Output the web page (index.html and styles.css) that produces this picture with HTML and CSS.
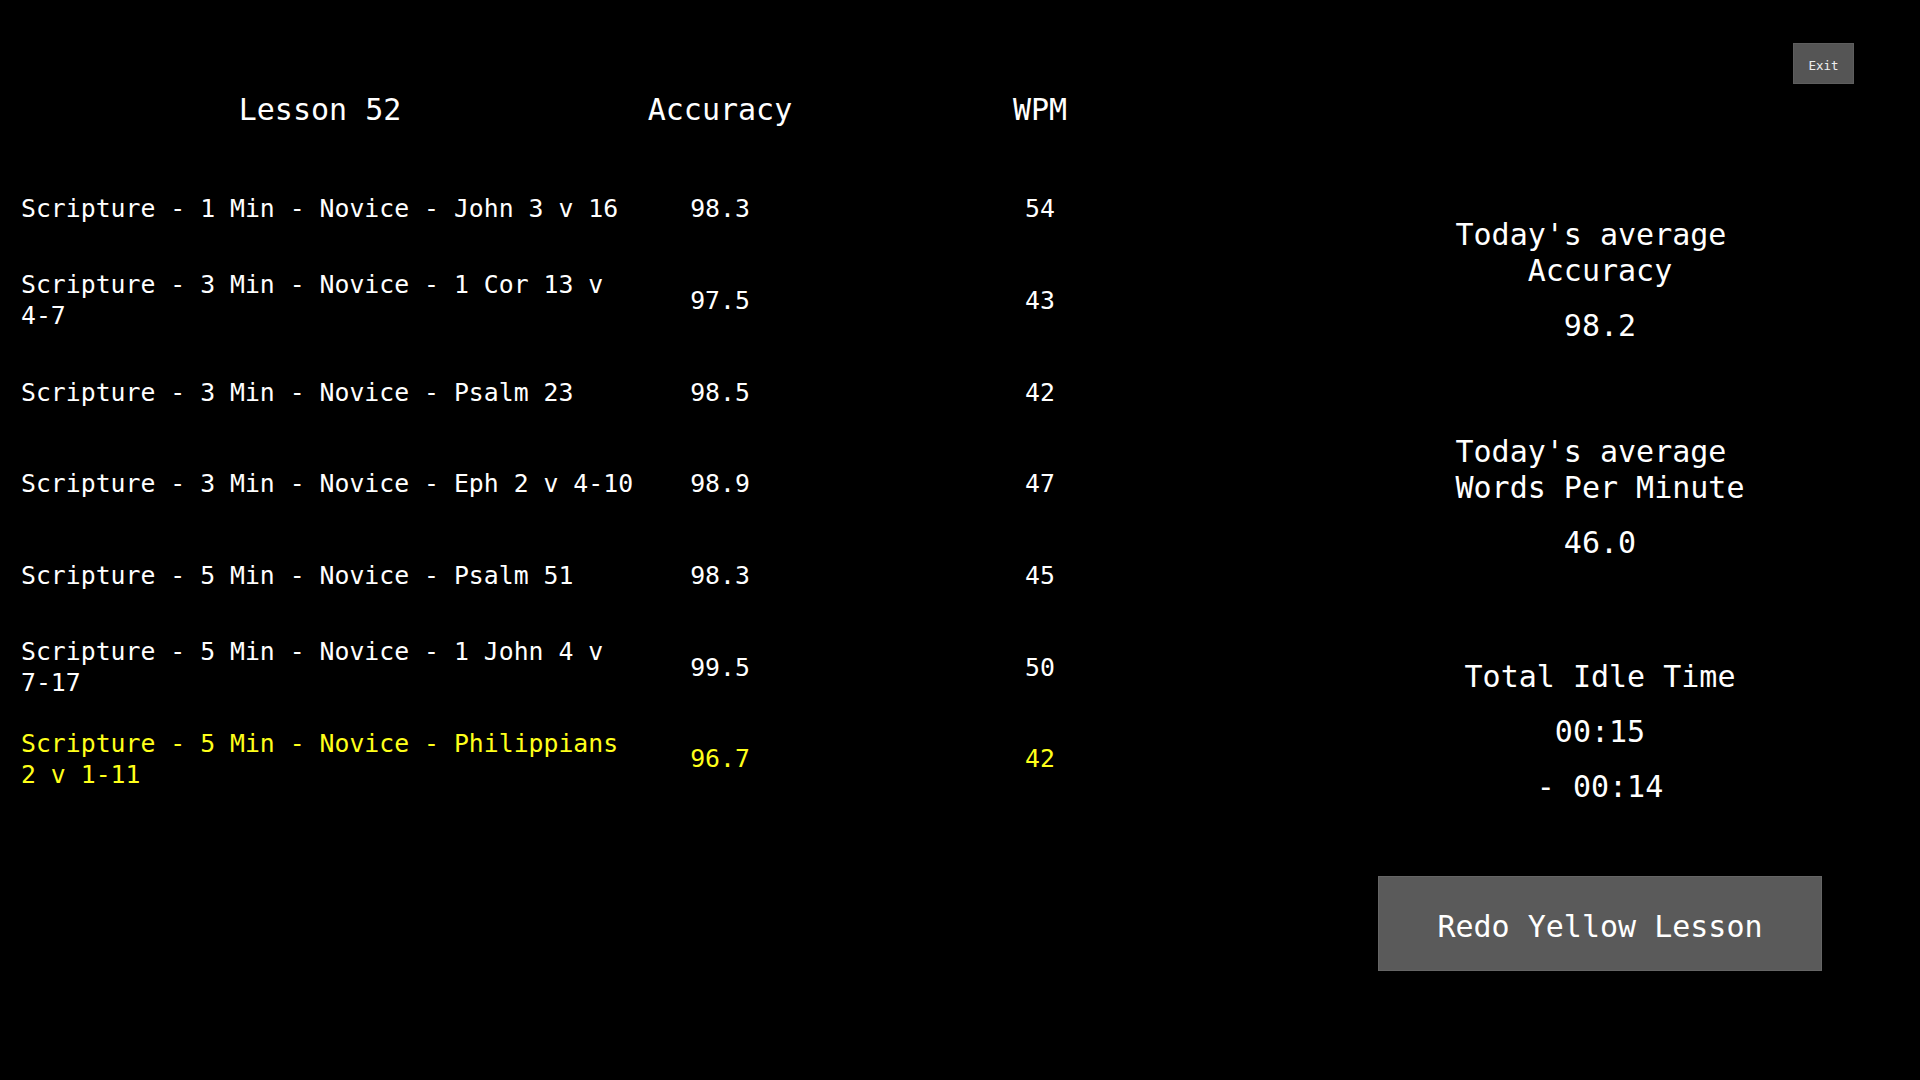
FILE: index.html
```html
<!DOCTYPE html>
<html lang="en">
<head>
<meta charset="utf-8">
<title>Lesson 52 Results</title>
<link rel="stylesheet" href="styles.css">
</head>
<body>
<button class="exit-btn">Exit</button>
<main class="page">
  <section class="results">
    <div class="cell head lesson-head">Lesson 52</div>
    <div class="cell head num">Accuracy</div>
    <div class="cell head num">WPM</div>

    <div class="cell lesson">Scripture - 1 Min - Novice - John 3 v 16</div>
    <div class="cell num">98.3</div>
    <div class="cell num">54</div>

    <div class="cell lesson">Scripture - 3 Min - Novice - 1 Cor 13 v 4-7</div>
    <div class="cell num">97.5</div>
    <div class="cell num">43</div>

    <div class="cell lesson">Scripture - 3 Min - Novice - Psalm 23</div>
    <div class="cell num">98.5</div>
    <div class="cell num">42</div>

    <div class="cell lesson">Scripture - 3 Min - Novice - Eph 2 v 4-10</div>
    <div class="cell num">98.9</div>
    <div class="cell num">47</div>

    <div class="cell lesson">Scripture - 5 Min - Novice - Psalm 51</div>
    <div class="cell num">98.3</div>
    <div class="cell num">45</div>

    <div class="cell lesson">Scripture - 5 Min - Novice - 1 John 4 v 7-17</div>
    <div class="cell num">99.5</div>
    <div class="cell num">50</div>

    <div class="cell lesson yellow">Scripture - 5 Min - Novice - Philippians 2 v 1-11</div>
    <div class="cell num yellow">96.7</div>
    <div class="cell num yellow">42</div>
  </section>

  <aside class="summary">
    <div class="stat">
      <div class="stat-title">Today's average&nbsp;<br>Accuracy</div>
      <div class="stat-value">98.2</div>
    </div>
    <div class="stat stat-wpm">
      <div class="stat-title">Today's average&nbsp;<br>Words Per Minute</div>
      <div class="stat-value">46.0</div>
    </div>
    <div class="stat stat-idle">
      <div class="stat-title">Total Idle Time</div>
      <div class="stat-value">00:15</div>
      <div class="stat-value">- 00:14</div>
    </div>
    <button class="redo-btn">Redo Yellow Lesson</button>
  </aside>
</main>
</body>
</html>
```

FILE: styles.css
```css
html, body {
  margin: 0;
  padding: 0;
  background: #000;
}

body {
  width: 1920px;
  height: 1080px;
  overflow: hidden;
  position: relative;
  color: #fff;
  font-family: "DejaVu Sans Mono", "Liberation Mono", monospace;
}

.page {
  display: flex;
  align-items: flex-start;
  padding-left: 8px;
}

.results {
  display: grid;
  grid-template-columns: 638px 148px 492px;
  grid-template-rows: 71px;
  grid-auto-rows: 91.67px;
  padding-top: 92px;
}

.cell {
  display: flex;
  align-items: center;
  font-size: 24.8px;
  line-height: 31px;
}

.head {
  font-size: 30px;
  line-height: 36px;
  justify-content: center;
  align-items: flex-start;
}

.lesson-head {
  padding-right: 14px;
}

.lesson {
  padding-left: 13px;
  padding-right: 5px;
}

.num {
  justify-content: center;
}

.yellow {
  color: #ffff1a;
}

.summary {
  margin-left: 92px;
  width: 444px;
  padding-top: 217px;
  display: flex;
  flex-direction: column;
  align-items: center;
  text-align: center;
  font-size: 30px;
  line-height: 36px;
}

.stat {
  display: flex;
  flex-direction: column;
  align-items: center;
}

.stat-value {
  margin-top: 19px;
}

.stat-wpm {
  margin-top: 90px;
}

.stat-idle {
  margin-top: 98px;
}

.redo-btn {
  margin-top: 71px;
  width: 444px;
  height: 95px;
  background: #5a5a5a;
  border: 1px solid #656565;
  color: #fff;
  font-family: "DejaVu Sans Mono", "Liberation Mono", monospace;
  font-size: 30px;
  padding: 5px 0 0;
}

.exit-btn {
  position: absolute;
  top: 43px;
  left: 1793px;
  width: 61px;
  height: 41px;
  background: #555;
  border: 1px solid #5e5e5e;
  color: #eee;
  font-family: "DejaVu Sans Mono", "Liberation Mono", monospace;
  font-size: 12.5px;
  padding: 4px 0 0;
}
```
